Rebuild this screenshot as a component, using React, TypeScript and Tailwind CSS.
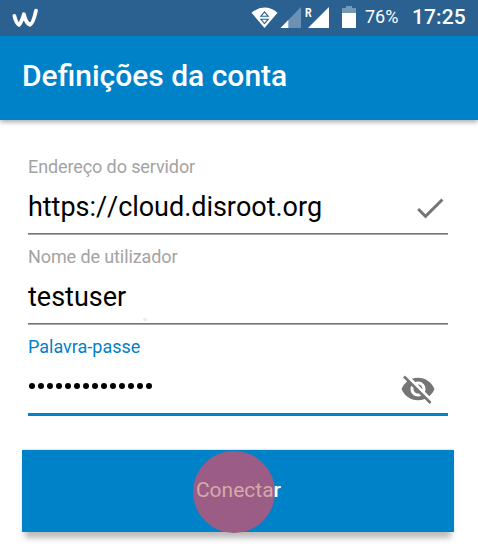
import { MdCheck, MdVisibilityOff } from 'react-icons/md';

function StatusBar() {
  return (
    <div className="relative h-9 shrink-0 bg-[#2a6191] text-white">
      <svg className="block" width="478" height="36" viewBox="0 0 478 36" fill="none">
        <path
          d="M14.4 15.9C15.2 19.5 17 23.6 19 24.8C21 23.5 22.8 17.5 23.9 14.2C24.8 18 26.5 23.6 29.8 24.8C32.8 24 34.8 16 36 10.6"
          stroke="#fff"
          strokeWidth="3.8"
          strokeLinecap="round"
          strokeLinejoin="round"
        />
        <path d="M251.5 12.7Q264.5 2.5 277.5 12.7L264.5 28Z" fill="#fff" />
        <path d="M260.8 16.3L264.5 11.8L268.2 16.3ZM260.8 19.2L264.5 23.7L268.2 19.2Z" stroke="#2a6191" strokeWidth="1.1" />
        <path d="M280.5 28L301 7V28Z" fill="#6b92b4" />
        <path d="M280.5 28L288.3 20V28Z" fill="#fff" />
        <path d="M308 28L329 7V28Z" fill="#fff" />
        <path d="M346 6H352V8H356V14H342V8H346Z" fill="#7499b8" />
        <path d="M342 13H356V28H342Z" fill="#fff" />
      </svg>
      <span className="absolute left-[305px] top-[5px] origin-left scale-x-[.8] text-[13px] font-bold leading-[15px]">R</span>
      <span className="absolute left-[365px] top-[7px] text-[18px] leading-[20px]">76%</span>
      <span className="absolute left-[412px] top-[5px] text-[21px] font-medium leading-[24px] tracking-[0.1px]">17:25</span>
    </div>
  );
}

export default function App() {
  return (
    <div className="flex h-[557px] w-[478px] flex-col overflow-hidden bg-white font-['Roboto',sans-serif]">
      <StatusBar />
      <header className="flex h-[84px] shrink-0 items-center bg-[#0082c9] pb-[4px] pl-[22px] shadow-[0_2px_5px_rgba(0,0,0,0.35)]">
        <h1 className="whitespace-nowrap text-[30px] font-medium leading-9 text-white">Definições da conta</h1>
      </header>
      <main className="flex flex-col pt-[30px]">
        <div className="ml-[28px] mr-[30px] flex h-[85px] flex-col border-b border-[#a6a6a6] shadow-[inset_0_-1px_0_#757575]">
          <label className="pt-[6px] text-[18px] leading-[22px] tracking-[-0.1px] text-[#a3a3a3]">Endereço do servidor</label>
          <div className="flex h-[55px] justify-between">
            <span className="pt-[13px] text-[27px] leading-[32px] tracking-[-0.04px] text-black [font-kerning:none]">https://cloud.disroot.org</span>
            <MdCheck className="mt-[12px] size-9 text-[#757575]" />
          </div>
        </div>
        <div className="relative ml-[28px] mr-[30px] flex h-[90px] flex-col border-b border-[#a6a6a6] shadow-[inset_0_-1px_0_#757575]">
          <label className="pt-[11px] text-[18px] leading-[22px] tracking-[-0.1px] text-[#a3a3a3]">Nome de utilizador</label>
          <span className="pt-[13px] text-[27px] leading-[32px] text-black">testuser</span>
          <i className="absolute left-[115px] top-[83px] h-[3px] w-[4px] rounded-full bg-[#f8e6e8]" />
        </div>
        <div className="ml-[28px] mr-[30px] flex h-[91px] flex-col border-b-[3px] border-[#0082c9]">
          <label className="pt-[11px] text-[18px] leading-[22px] text-[#0082c9]">Palavra-passe</label>
          <div className="flex justify-between pr-[12px]">
            <div className="flex gap-[3px] pl-[1.3px] pt-[25px]">
              {Array.from({ length: 14 }, (_, i) => (
                <span key={i} className="size-[6px] rounded-full bg-black" />
              ))}
            </div>
            <MdVisibilityOff className="mt-[13px] size-9 text-[#757575]" />
          </div>
        </div>
        <button className="relative ml-[22px] mt-[34px] flex h-[82px] w-[432px] items-center justify-center bg-[#0082c9] shadow-[0_-1px_2px_-1px_rgba(0,0,0,0.3),0_9px_6px_-3px_rgba(0,0,0,0.27)]">
          <span className="absolute left-[171px] top-px size-[82px] rounded-full bg-[#9b5c85]" />
          <span className="relative pb-[2px] pl-px text-[21px] leading-6 text-[#d6aaa9]">
            Conecta<span className="font-medium text-white">r</span>
          </span>
        </button>
      </main>
    </div>
  );
}
